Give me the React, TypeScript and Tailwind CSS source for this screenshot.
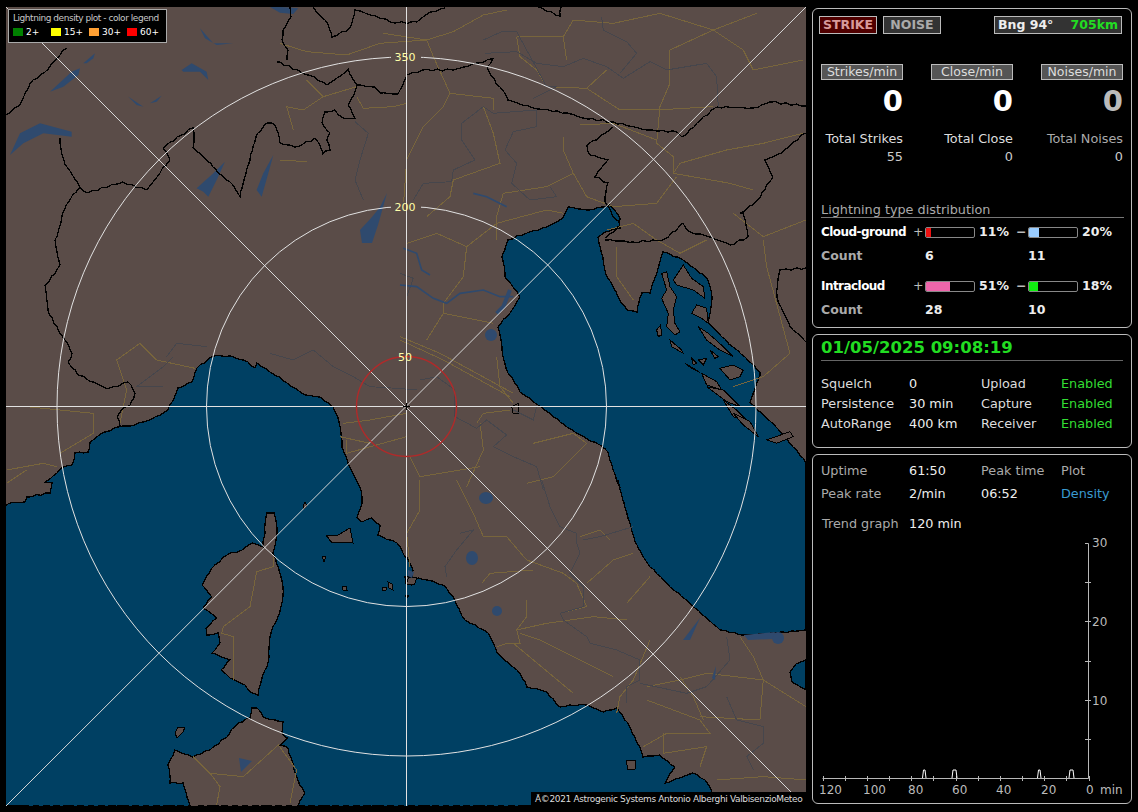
const land = "#5a4c48";
const sea = "#004063";
const lake = "#2f4a6e";
const road = "#78653c";
const grey = "#46464c";

const tyrrhenian =
  "6,505 10,503 25,502 27,497 50,493 52,483 45,482 57,473 63,467 72,465 75,453 88,452 90,442 98,436 105,432 118,427 130,426 150,420 168,410 172,402 178,388 192,382 197,368 213,356 230,356 248,362 255,368 257,363 270,372 287,383 305,395 320,397 333,407 339,422 342,447 348,463 360,487 362,503 357,518 362,522 372,518 380,525 378,535 397,543 405,557 407,557 413,570 412,576 405,577 406,583 412,585 418,578 427,580 443,585 455,600 465,620 488,633 497,653 517,670 527,687 540,690 547,692 560,707 570,705 587,705 603,712 617,708 630,727 640,747 643,757 660,755 675,767 665,783 693,773 705,780 712,792 716,806 6,806";
const adriatic =
  "618,480 630,523 637,545 650,567 670,587 695,608 720,630 743,635 777,633 806,630 806,463 793,447 777,428 750,403 760,375 760,372 733,347 708,322 712,297 707,278 683,260 663,252 657,273 650,293 642,293 637,312 627,310 618,297 607,277 603,257 598,237 605,232 620,228 620,218 610,205 603,207 587,210 568,207 563,218 547,227 527,233 508,240 502,257 505,277 520,297 510,313 498,327 502,350 508,373 520,392 538,405 560,422 580,435 600,445 608,452 620,488";
const corsica =
  "267,513 274,513 277,533 273,553 281,577 283,595 278,617 271,633 269,657 265,670 258,695 250,692 245,685 230,678 221,670 230,660 212,653 220,643 218,633 207,635 206,628 217,618 203,608 212,597 202,585 212,568 227,555 242,550 252,543 263,547 265,533";
const sardinia =
  "252,708 257,708 263,717 275,720 283,722 282,733 288,738 280,745 288,748 293,763 298,780 305,793 298,806 190,806 183,783 170,783 168,765 175,750 193,757 210,750 227,737 238,723 250,718";
const islets = [
  "326,535 338,535 350,528 353,543 347,542 332,543",
  "175,733 178,727 185,727 183,732 177,738",
  "409,577 417,578 414,585 406,584",
  "382,587 387,587 386,590 382,590",
  "322,556 326,556 324,562",
  "342,586 346,586 347,590 343,590",
  "388,582 392,584 393,590 389,588",
  "303,506 305,502 307,506 304,509",
  "626,760 635,760 635,769 628,770",
  "405,595 409,595 407,598",
];
const croatia = [
  "M785 250 L800 245 L810 290 L830 320 L820 360 L825 400 L840 425 L825 435 L800 410 L805 370 L785 325 L800 300 Z",
  "M820 270 L850 225 L875 265 L910 290 L915 325 L880 300 L830 285 Z",
  "M875 370 L890 345 L920 355 L925 400 L905 385 Z",
  "M895 410 L925 430 L970 470 L1000 500 L960 480 L920 450 Z",
  "M960 535 L1000 525 L1030 540 L1020 560 L990 570 Z",
  "M905 550 L950 575 L965 600 L920 585 Z",
  "M920 590 L970 600 L1020 650 L980 635 Z",
  "M970 630 L1010 660 L1050 700 L1000 680 Z",
  "M1000 670 L1050 695 L1075 740 L1030 705 Z",
  "M855 520 L880 535 L900 548 L875 535 Z",
  "M875 505 L890 520 L880 525 Z",
  "M895 510 L920 505 L910 525 Z",
  "M770 420 L782 405 L785 435 L775 440 Z",
  "M810 450 L845 480 L850 490 L815 470 Z",
  "M930 480 L955 500 L945 505 Z",
  "M1100 750 L1170 725 L1180 740 L1130 760 Z",
  "M335 650 L355 640 L355 670 L340 672 Z",
];

// borders, page coordinates
const borders = [
  "6,115 20,105 33,80 45,72 60,55 67,48",
  "80,187 70,200 62,215 55,240 60,265 45,285 48,310 65,340 72,353 68,362 78,375 93,382 107,389 128,382 135,393 130,405 123,408 117,417 120,426",
  "60,138 64,160 67,167 80,187 88,193 123,182 147,190 160,173 170,160 163,148 182,135 193,128 193,148 213,167 230,182 240,197 250,160 258,133 267,123 275,125 280,143 295,147 315,138 323,154 330,150 327,140 330,133 322,123 325,112 335,110 343,118 355,118 348,105 357,85 375,87 380,93 398,94 407,75 423,70 453,70 477,63 493,59 487,67 500,87 508,100 533,108 567,113 583,118 613,122 647,130 677,132 682,137 703,117 717,107 753,108 770,102 806,106",
  "357,85 348,69 337,78 327,85 308,75 280,62 277,62",
  "282,40 288,50 287,60",
  "290,7 291,17 283,30 282,40",
  "313,7 325,20 332,37 350,28 355,10 395,23 417,22 430,12 445,8",
  "538,7 552,12 560,16 561,7",
  "613,127 587,145 590,155 608,160 595,177 608,183 605,202 612,215 620,225 605,238",
  "605,240 633,242 663,240 683,223 690,232 710,237 730,245 748,237 743,213 740,213 760,198 773,177 765,160 782,153 806,133",
  "806,268 780,270 777,297 793,330 806,342",
];

const roads12 = [
  "M310 100 L440 120 L520 95 L610 45 L680 30",
  "M440 120 L460 170 L510 280 L640 295 L640 330",
  "M510 280 L490 320 L430 380 L380 480 L370 620",
  "M0 130 L80 155 L200 165 L300 130 L440 120",
  "M710 110 L850 110 L860 180",
  "M710 110 L720 170 L770 210 L800 260 L920 265 L980 210",
  "M850 110 L880 60 L1000 70 L1140 40 L1300 90 L1430 40",
  "M920 265 L1020 330 L1130 330 L1300 320",
  "M1170 150 L1170 250 L1140 320 L1130 430 L1180 470 L1180 520 L1350 550 L1420 570",
  "M1180 520 L1200 490 L1340 450 L1450 430 L1568 400",
  "M1170 150 L1300 90 L1390 150 L1420 210 L1568 180",
  "M900 375 L1000 370 L1130 420",
  "M850 410 L850 450 L880 520 L800 560 L670 580 L650 650 L650 720",
  "M880 520 L920 590 L1000 620 L1130 610 L1190 530",
  "M610 320 L640 400 L660 490 L520 540 L510 590 L440 650",
  "M0 480 L80 485",
  "M130 290 L70 330 L20 320 L40 390",
  "M230 290 L250 325 L340 320 L380 310",
  "M80 240 L130 290 L230 260",
];
const grey12 = [
  "M610 120 L665 95 L710 95 L800 260 L830 260 L760 295",
  "M615 160 L710 155 L770 190 L850 200 L910 175 L980 200 L1030 235 L1110 185 L1160 210 L1280 190 L1310 230 L1315 320",
  "M965 50 L970 90 L1040 125 L1070 160 L1020 220",
  "M545 370 L610 320 L640 340 L770 330 L770 380 L700 395 L675 450 L710 490 L695 550 L750 600 L830 590 L810 560",
  "M545 370 L545 420 L585 480 L520 510 L515 545 L430 550 L400 600",
  "M225 365 L265 400 L240 480 L225 540 L250 600",
];
const roads8 = [
  "M0 440 L120 490 L340 610",
  "M0 450 L130 510 L330 620",
  "M20 160 L110 130 L200 170 L290 100 L440 60 L490 70",
  "M200 170 L190 260 L130 340 L130 370 L280 400",
  "M130 370 L80 450",
  "M650 170 L650 260 L700 330",
  "M620 120 L700 100 L770 150 L840 190 L920 150",
  "M1090 150 L1100 230 L1170 490 L1090 560 L1000 590",
  "M1000 70 L1090 140 L1218 90",
  "M230 700 L250 670 L330 660",
  "M290 500 L300 590 L340 640",
  "M240 700 L250 780 L200 890",
  "M400 760 L520 730 L560 760 L460 860 L380 880",
  "M30 800 L60 860 L240 830",
];
const grey8 = [
  "M60 570 L110 560 L165 600 L165 680 L230 715 L260 690 L320 735 L280 770 L340 800 L410 830 L430 900",
  "M340 660 L400 690 L410 650",
  "M0 250 L40 265 L20 320",
];
const roads9 = [
  "M350 60 L420 10 L470 60 L585 85",
  "M350 60 L380 150 L360 250",
  "M80 200 L280 220 L280 280 L180 340",
  "M20 390 L130 370 L170 380",
  "M20 430 L80 390",
  "M1020 290 L1110 310",
  "M1030 250 L1110 240 L1220 220",
  "M1040 300 L1040 340 L1220 290",
];
const grey9 = [
  "M500 50 L530 10 L620 20",
  "M490 140 L410 140 L490 80 L520 50",
  "M810 40 L880 60 L940 30 L1000 80 L1060 110 L1110 140 L1190 145 L1250 150",
];
const roads11 = [
  "M60 0 L60 90 L20 160 L30 260",
  "M170 0 L220 100 L250 170 L320 170 L380 240 L490 280 L530 310 L560 380 L480 400",
  "M380 360 L380 410 L350 450 L360 490 L320 490 L290 500",
  "M350 450 L440 430 L580 410 L680 420",
  "M340 490 L520 640",
  "M360 460 L420 480 L640 590",
  "M245 310 L270 280 L400 270",
  "M560 310 L640 240 L700 220",
  "M680 370 L750 290",
  "M750 480 L700 600 L660 650 L650 700",
  "M740 620 L840 600 L920 580 L1090 600 L1080 720 L900 710",
  "M1090 600 L1218 680",
  "M740 660 L900 720 L930 760 L800 760 L730 800",
  "M790 760 L790 820 L920 800 L900 860",
  "M950 900 L1090 890 L1218 900",
  "M840 590 L880 650 L910 720",
  "M1020 470 L1060 530 L1090 600",
  "M630 180 L600 150 L540 170",
];
const grey11 = [
  "M425 0 L450 80 L480 140 L530 160 L530 190 L540 220 L510 280 L550 320 L550 380 L480 400 L490 420 L560 470 L570 490 L650 510 L720 540 L720 600 L680 620 L680 670",
  "M700 140 L600 170 L550 180",
  "M180 160 L220 150 L170 210 L135 260 L140 290",
  "M980 470 L990 540 L920 620 L860 640 L720 610",
  "M980 650 L1010 720 L1090 740 L1090 790 L1040 830 L1060 870",
];
const roads10 = [
  "M370 170 L370 200 L320 215 L300 320 L220 380 L215 400 L250 410 L250 540",
  "M130 770 L180 820 L280 830 L385 735 L440 810 L420 910",
  "M180 820 L210 860 L200 915",
];
const lakes5 = [
  "M30 465 L60 400 L120 370 L215 395 L215 410 L130 400 L70 430 Z",
  "M150 275 L215 215 L240 205 L235 225 L190 260 Z",
  "M250 190 L285 160 L280 175 L260 190 Z",
  "M385 290 L430 320 L410 315 Z",
  "M450 310 L485 287 L470 305 Z",
  "M545 210 L575 190 L620 215 L625 240 L600 215 L550 215 Z",
  "M600 85 L640 130 L700 130 L650 135 L615 115 Z",
  "M590 565 L640 520 L675 485 L650 540 L625 590 L610 575 Z",
  "M770 570 L790 520 L820 465 L805 520 L785 590 Z",
  "M805 18 L895 25 L880 42 L840 38 Z",
];

// breaks long segments up so coasts and borders don't look ruled
function rough(points: string, amount: number, close = false) {
  const pts = points.split(" ").map((p) => p.split(",").map(Number));
  const out: string[] = [];
  const count = close ? pts.length : pts.length - 1;
  for (let i = 0; i < count; i++) {
    const [x1, y1] = pts[i];
    const [x2, y2] = pts[(i + 1) % pts.length];
    const len = Math.hypot(x2 - x1, y2 - y1);
    const steps = Math.max(1, Math.round(len / 5));
    for (let s = 0; s < steps; s++) {
      const t = s / steps;
      const j = s === 0 ? 0 : amount;
      const dx = Math.sin(x1 * 12.9 + y1 * 78.2 + s * 37.7) * j;
      const dy = Math.sin(x1 * 39.3 + y1 * 11.1 + s * 53.1) * j;
      out.push(`${(x1 + (x2 - x1) * t + dx).toFixed(1)},${(y1 + (y2 - y1) * t + dy).toFixed(1)}`);
    }
  }
  if (!close) out.push(pts[pts.length - 1].join(","));
  return out.join(" ");
}

function Scaled({ x, y, lines, color }: { x: number; y: number; lines: string[]; color: string }) {
  return (
    <g transform={`translate(${x} ${y}) scale(0.3333)`} fill="none" stroke={color} shapeRendering="crispEdges">
      {lines.map((d, i) => (
        <path key={i} d={d} strokeWidth="1" vectorEffect="non-scaling-stroke" />
      ))}
    </g>
  );
}

function RingLabel({ y, text }: { y: number; text: string }) {
  return (
    <g>
      <rect x={391} y={y - 5} width={30} height={10} fill={land} />
      <line x1="406.5" y1={y - 6} x2="406.5" y2={y + 6} stroke="#ddd" />
      <text x="405" y={y + 4} textAnchor="middle" fontSize="11" fill="#ffffa8" fontFamily="'DejaVu Sans', sans-serif">
        {text}
      </text>
    </g>
  );
}

function RadarMap() {
  const coast = { stroke: "#000", strokeWidth: 1.3 };
  return (
    <svg viewBox="6 7 800 799" className="block w-full h-full">
      <rect x="6" y="7" width="800" height="799" fill={land} />
      <g shapeRendering="crispEdges">
        <polygon points={rough(tyrrhenian, 0.7, true)} fill={sea} {...coast} />
        <polygon points={rough(adriatic, 0.7, true)} fill={sea} {...coast} />
        <polygon points="806,660 796,664 790,672 792,682 806,690" fill={sea} {...coast} />
        <polygon points={rough(corsica, 0.8, true)} fill={land} {...coast} />
        <polygon points={rough(sardinia, 0.8, true)} fill={land} {...coast} />
        {islets.map((p, i) => (
          <polygon key={i} points={p} fill={land} stroke="#000" strokeWidth="1" />
        ))}
        <g transform="translate(400 190) scale(0.3333)" fill={land} stroke="#000">
          {croatia.map((d, i) => (
            <path key={i} d={d} strokeWidth="1" vectorEffect="non-scaling-stroke" />
          ))}
        </g>
      </g>

      <Scaled x={280} y={0} lines={roads12} color={road} />
      <Scaled x={400} y={190} lines={roads8} color={road} />
      <Scaled x={0} y={340} lines={roads9} color={road} />
      <Scaled x={400} y={480} lines={roads11} color={road} />
      <Scaled x={150} y={500} lines={roads10} color={road} />
      <Scaled x={280} y={0} lines={grey12} color={grey} />
      <Scaled x={400} y={190} lines={grey8} color={grey} />
      <Scaled x={0} y={340} lines={grey9} color={grey} />
      <Scaled x={400} y={480} lines={grey11} color={grey} />

      {/* rivers */}
      <g transform="translate(400 190) scale(0.3333)" fill="none" stroke={lake} strokeWidth="5">
        <path d="M0 285 L50 290 L100 325 L140 340 L180 310 L250 300 L300 320 L340 320" />
        <path d="M220 10 L260 20 L320 50" />
        <path d="M10 175 L50 190 L65 240 L90 255" />
        <path d="M330 300 L310 350 L290 370" strokeWidth="12" />
      </g>

      {/* lakes */}
      <g transform="scale(0.3333)" fill={lake}>
        {lakes5.map((d, i) => (
          <path key={i} d={d} />
        ))}
      </g>
      <g fill={lake}>
        <path d="M387 193 L380 207 L372 217 L360 230 L362 243 L372 243 L378 225 Z" />
        <ellipse cx="486" cy="498" rx="7" ry="6" />
        <ellipse cx="472" cy="558" rx="6" ry="7" />
        <circle cx="497" cy="611" r="5" />
        <ellipse cx="491" cy="335" rx="6" ry="6" />
        <circle cx="778" cy="638" r="6" />
        <path d="M744 635 L775 632 L772 639 L748 640 Z" />
        <path d="M239 758 L252 761 L241 772 Z" />
        <path d="M683 640 L700 618 L690 640 Z" />
        <path d="M712 678 L716 666 L715 680 Z" />
        <path d="M408 570 L414 572 L412 578 L408 576 Z" />
      </g>

      {/* political borders */}
      <g fill="none" stroke="#000" strokeWidth="1.3" shapeRendering="crispEdges">
        {borders.map((p, i) => (
          <polyline key={i} points={rough(p, 1)} />
        ))}
      </g>

      {/* range rings and crosshair */}
      <g fill="none" stroke="#e2e2e2" strokeWidth="1">
        <line x1="6" y1="7" x2="805" y2="806" stroke="#d8d8d8" />
        <line x1="806" y1="7" x2="6" y2="806" stroke="#d8d8d8" />
        <line x1="406.5" y1="7" x2="406.5" y2="806" />
        <line x1="6" y1="406.5" x2="806" y2="406.5" />
        <circle cx="406.5" cy="406.5" r="200" />
        <circle cx="406.5" cy="406.5" r="349.5" />
        <circle cx="406.5" cy="406.5" r="50" stroke="#b02a2a" strokeWidth="1.4" />
      </g>
      <RingLabel y={57} text="350" />
      <RingLabel y={207} text="200" />
      <text x="405" y="361" textAnchor="middle" fontSize="11" fill="#ffffa8" fontFamily="'DejaVu Sans', sans-serif">
        50
      </text>
      <path d="M403 406.5 H410 M406.5 403 V410" stroke="#000" fill="none" />
    </svg>
  );
}

function Legend() {
  const items = [
    { color: "bg-[#008000]", label: "2+" },
    { color: "bg-[#ffff00]", label: "15+" },
    { color: "bg-[#ffa033]", label: "30+" },
    { color: "bg-[#ff0000]", label: "60+" },
  ];
  return (
    <div className="absolute left-[2px] top-[2px] w-[159px] h-[34px] bg-black border border-[#aaa] pl-[4px] text-[9px] leading-[12px] text-[#c8c8c8] font-['DejaVu_Sans',sans-serif]">
      <div className="mt-[2px] whitespace-nowrap tracking-[-0.46px]">Lightning density plot - color legend</div>
      <div className="flex mt-[3px]">
        {items.map((it) => (
          <div key={it.label} className="flex items-center w-[38px] h-[9px] gap-[3px] text-white">
            <span className={`w-[10px] h-[8px] ${it.color}`} />
            {it.label}
          </div>
        ))}
      </div>
    </div>
  );
}

function Panel({ className, children }: { className: string; children: React.ReactNode }) {
  return <div className={`border border-[#bbb] rounded-[6px] px-[8px] ${className}`}>{children}</div>;
}

function Stat({ label, big, total, value, dim }: { label: string; big: string; total: string; value: string; dim?: boolean }) {
  return (
    <div className="flex flex-col items-end w-[82px]">
      <div className="w-[82px] h-[16px] bg-[#555] border border-[#bbb] text-[#ddd] text-[12.5px] text-center leading-[14px]">{label}</div>
      <div className={`text-[29px] leading-[32px] mt-[5px] font-bold ${dim ? "text-[#bbb]" : "text-white"}`}>{big}</div>
      <div className={`mt-[14px] leading-[16px] whitespace-nowrap ${dim ? "text-[#aaa]" : "text-[#ddd]"}`}>{total}</div>
      <div className="mt-[2px] leading-[16px] text-[#ccc]">{value}</div>
    </div>
  );
}

function Bar({ pct, color }: { pct: number; color: string }) {
  return (
    <div className="w-[50px] h-[11px] border border-[#888] rounded-[2px] overflow-hidden">
      <div className={`h-full ${color}`} style={{ width: `${pct}%` }} />
    </div>
  );
}

function TypeRow({ name, plus, plusColor, plusPct, minus, minusColor, minusPct, c1, c2 }: {
  name: string; plus: string; plusColor: string; plusPct: number; minus: string; minusColor: string; minusPct: number; c1: string; c2: string;
}) {
  return (
    <div className="font-bold text-[12.5px]">
      <div className="flex items-center h-[16px]">
        <span className="w-[92px] text-white text-[12px] tracking-[-0.55px] whitespace-nowrap">{name}</span>
        <span className="w-[12px] text-[#bbb] font-normal">+</span>
        <Bar pct={plusPct} color={plusColor} />
        <span className="w-[41px] pl-[4px] text-[#eee]">{plus}</span>
        <span className="w-[12px] text-[#bbb]">−</span>
        <Bar pct={minusPct} color={minusColor} />
        <span className="pl-[4px] text-[#eee]">{minus}</span>
      </div>
      <div className="flex items-center h-[16px] mt-[8px]">
        <span className="w-[104px] text-[#aaa]">Count</span>
        <span className="w-[103px] text-[#eee]">{c1}</span>
        <span className="text-[#eee]">{c2}</span>
      </div>
    </div>
  );
}

function InfoRow({ a, b, c, d, dClass, aClass, cClass }: { a: string; b: string; c: string; d: string; dClass: string; aClass: string; cClass?: string }) {
  return (
    <div className="flex h-[20px] items-center whitespace-nowrap">
      <span className={`w-[88px] ${aClass}`}>{a}</span>
      <span className="w-[72px] text-[#eee]">{b}</span>
      <span className={`w-[80px] ${cClass ?? aClass}`}>{c}</span>
      <span className={dClass}>{d}</span>
    </div>
  );
}

function TrendGraph() {
  const xTicks = Array.from({ length: 13 }, (_, i) => 822.5 + i * 22.17);
  const xLabels = [["120", 819], ["100", 863], ["80", 908], ["60", 952], ["40", 996], ["20", 1041], ["0", 1086]] as const;
  const peaks = [
    "M922.5 777 L923.5 769 L925 769 L926 777",
    "M952 777 L953 769 L956 769 L957 777",
    "M1037.5 777 L1038.5 769 L1040 769 L1041 777",
    "M1069 777 L1070 769 L1073 769 L1074 777",
  ];
  return (
    <svg viewBox="813 535 318 262" className="block w-[318px] h-[262px]">
      <g stroke="#b8b8b8" fill="none">
        <path d="M822.5 777.5 H1088.5 V542.5 H1085" />
        {xTicks.map((x) => (
          <path key={x} d={`M${x.toFixed(0)}.5 775 V780`} />
        ))}
        {[581, 620, 660, 699, 738].map((y) => (
          <path key={y} d={`M1085 ${y}.5 H1091`} />
        ))}
      </g>
      <g stroke="#fff" fill="none">
        {peaks.map((d) => (
          <path key={d} d={d} />
        ))}
      </g>
      <g fontSize="12" fill="#bbb" fontFamily="'DejaVu Sans', sans-serif">
        {xLabels.map(([t, x]) => (
          <text key={t} x={x} y="793">
            {t}
          </text>
        ))}
        <text x="1100" y="793">min</text>
        <text x="1092" y="546">30</text>
        <text x="1092" y="625">20</text>
        <text x="1092" y="704">10</text>
      </g>
    </svg>
  );
}

export default function App() {
  return (
    <div className="w-[1138px] h-[812px] bg-black flex overflow-hidden font-['DejaVu_Sans',sans-serif] text-[12.8px]">
      <div className="relative ml-[6px] mt-[7px] w-[800px] h-[799px]">
        <RadarMap />
        <Legend />
        <div className="absolute right-0 bottom-0 w-[275px] h-[14px] bg-black text-[#ddd] text-[9px] leading-[14px] pl-[4px] whitespace-nowrap tracking-[-0.36px]">
          Ã©2021 Astrogenic Systems Antonio Alberghi ValbisenzioMeteo
        </div>
      </div>

      <div className="ml-[6px] mt-[8px] w-[320px] flex flex-col gap-[6px]">
        <Panel className="h-[320px]">
          <div className="flex mt-[7px] font-bold text-[12.5px] leading-[16px] -ml-[2px]">
            <div className="w-[58px] h-[18px] bg-[#500000] border border-[#bbb] text-[#d89a9a] text-center">STRIKE</div>
            <div className="w-[58px] h-[18px] ml-[6px] bg-[#333] border border-[#bbb] text-[#aaa] text-center">NOISE</div>
            <div className="w-[128px] h-[18px] ml-[53px] bg-[#333] border border-[#bbb] flex justify-between px-[3px]">
              <span className="text-[#eee]">Bng 94°</span>
              <span className="text-[#22dd22]">705km</span>
            </div>
          </div>
          <div className="flex gap-[28px] mt-[30px]">
            <Stat label="Strikes/min" big="0" total="Total Strikes" value="55" />
            <Stat label="Close/min" big="0" total="Total Close" value="0" />
            <Stat label="Noises/min" big="0" total="Total Noises" value="0" dim />
          </div>
          <div className="mt-[37px] h-[15px] leading-[16px] w-[303px] border-b border-[#777] text-[#aaa] box-content">Lightning type distribution</div>
          <div className="mt-[6px] flex flex-col gap-[14px]">
            <TypeRow name="Cloud-ground" plus="11%" plusColor="bg-[#ee1111]" plusPct={11} minus="20%" minusColor="bg-[#99ccff]" minusPct={20} c1="6" c2="11" />
            <TypeRow name="Intracloud" plus="51%" plusColor="bg-[#ee66aa]" plusPct={51} minus="18%" minusColor="bg-[#11ee11]" minusPct={18} c1="28" c2="10" />
          </div>
        </Panel>

        <Panel className="h-[114px]">
          <div className="mt-[2px] h-[23px] w-[302px] border-b border-[#666] text-[#22dd22] font-bold text-[16.5px] leading-[22px] box-content whitespace-nowrap">01/05/2025 09:08:19</div>
          <div className="mt-[13px]">
            <InfoRow a="Squelch" b="0" c="Upload" d="Enabled" aClass="text-[#ddd]" dClass="text-[#33dd33]" />
            <InfoRow a="Persistence" b="30 min" c="Capture" d="Enabled" aClass="text-[#ddd]" dClass="text-[#33dd33]" />
            <InfoRow a="AutoRange" b="400 km" c="Receiver" d="Enabled" aClass="text-[#ddd]" dClass="text-[#33dd33]" />
          </div>
        </Panel>

        <Panel className="h-[350px] !px-0">
          <div className="px-[8px] mt-[6px] flex flex-col gap-[3px]">
            <InfoRow a="Uptime" b="61:50" c="Peak time" d="Plot" aClass="text-[#aaa]" dClass="text-[#aaa]" />
            <InfoRow a="Peak rate" b="2/min" c="06:52" d="Density" aClass="text-[#aaa]" cClass="text-[#eee]" dClass="text-[#3a9ad0]" />
          </div>
          <div className="px-[9px] mt-[10px] flex h-[20px] items-center">
            <span className="w-[87px] text-[#aaa] whitespace-nowrap">Trend graph</span>
            <span className="text-[#eee]">120 min</span>
          </div>
          <div className="mt-[2px]">
            <TrendGraph />
          </div>
        </Panel>
      </div>
    </div>
  );
}
